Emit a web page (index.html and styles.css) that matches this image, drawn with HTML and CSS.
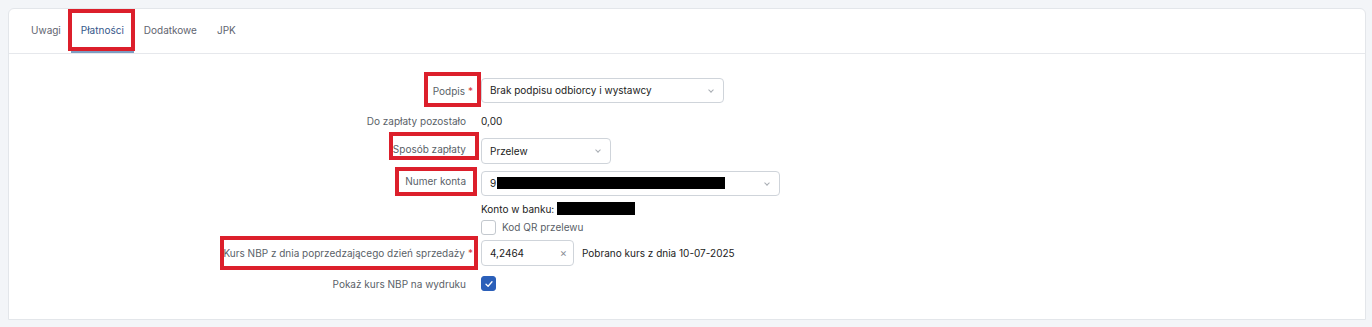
FILE: index.html
```html
<!DOCTYPE html>
<html lang="pl">
<head>
    <meta charset="UTF-8">
    <meta name="viewport" content="width=device-width, initial-scale=1.0">
    <title>Płatności</title>
    <link rel="stylesheet" href="styles.css">
</head>
<body>
    <div class="card">
        <ul class="tabs">
            <li class="tab">Uwagi</li>
            <li class="tab active marked">Płatności</li>
            <li class="tab">Dodatkowe</li>
            <li class="tab">JPK</li>
        </ul>

        <div class="form">
            <div class="row row-podpis">
                <label class="label marked mark-podpis">Podpis<span class="req">*</span></label>
                <div class="control">
                    <div class="select select-wide">Brak podpisu odbiorcy i wystawcy<span class="chevron"></span></div>
                </div>
            </div>

            <div class="row row-text">
                <label class="label">Do zapłaty pozostało</label>
                <div class="control value">0,00</div>
            </div>

            <div class="row row-sposob">
                <label class="label marked mark-sposob">Sposób zapłaty</label>
                <div class="control">
                    <div class="select select-small">Przelew<span class="chevron"></span></div>
                </div>
            </div>

            <div class="row row-konto">
                <label class="label marked mark-konto">Numer konta</label>
                <div class="control">
                    <div class="select select-account">9<span class="redact redact-account"></span><span class="chevron"></span></div>
                </div>
            </div>

            <div class="row row-bank">
                <div class="label"></div>
                <div class="control value">Konto w banku: <span class="redact redact-bank"></span></div>
            </div>

            <div class="row row-qr">
                <div class="label"></div>
                <div class="control check-line">
                    <span class="checkbox"></span>
                    <span class="check-text">Kod QR przelewu</span>
                </div>
            </div>

            <div class="row row-kurs">
                <label class="label marked mark-kurs">Kurs NBP z dnia poprzedzającego dzień sprzedaży<span class="req">*</span></label>
                <div class="control kurs-line">
                    <div class="input">4,2464<span class="clear">×</span></div>
                    <span class="value">Pobrano kurs z dnia 10-07-2025</span>
                </div>
            </div>

            <div class="row row-pokaz">
                <label class="label">Pokaż kurs NBP na wydruku</label>
                <div class="control">
                    <span class="checkbox checked">
                        <svg width="10" height="10" viewBox="0 0 10 10"><path d="M2 5.2 4.1 7.2 8 2.8" fill="none" stroke="#fff" stroke-width="1.3" stroke-linecap="round" stroke-linejoin="round"/></svg>
                    </span>
                </div>
            </div>
        </div>
    </div>
</body>
</html>
```

FILE: styles.css
```css
body {
    margin: 0;
    padding: 8px 6px 0 8px;
    font-family: Inter, "Noto Sans", sans-serif;
    font-size: 10px;
    background-color: #f3f5f8;
    color: #222;
}

.card {
    background-color: #fff;
    border: 1px solid #e3e6ea;
    border-radius: 6px 6px 0 0;
    height: 310px;
}

.tabs {
    list-style: none;
    margin: 0;
    padding: 0 0 0 12px;
    display: flex;
    height: 44px;
    border-bottom: 1px solid #e6e8ec;
}
.tab {
    position: relative;
    padding: 0 10px;
    line-height: 43px;
    color: #5f6570;
}
.tab.active {
    color: #35578a;
    box-shadow: inset 0 -2px 0 #7d9dc2;
}
.tab.marked::after {
    content: "";
    position: absolute;
    left: -3px;
    right: -1px;
    top: 0;
    bottom: 2px;
    border: 4px solid #dc1f2b;
}

.form {
    padding-top: 24px;
}
.row {
    display: flex;
    align-items: center;
    gap: 15px;
}
.label {
    position: relative;
    width: 457px;
    flex: none;
    text-align: right;
    color: #5a5f68;
}
.req {
    color: #d63a3a;
    margin-left: 3px;
    margin-right: -7px;
}
.label.marked::after {
    content: "";
    position: absolute;
    border: 4px solid #dc1f2b;
}
.mark-podpis::after { left: 415px; right: -15px; top: -13px; bottom: -10px; }
.mark-sposob { margin-bottom: 4px; }
.mark-sposob::after { left: 380px; right: -13px; top: -11px; bottom: -5px; }
.mark-konto { margin-bottom: 6px; }
.mark-konto::after { left: 386px; right: -11px; top: -8px; bottom: -9px; }
.mark-kurs::after { left: 211px; right: -12px; top: -11px; bottom: -11px; }

.row-text { margin-top: 5px; height: 25px; }
.row-sposob { margin-top: 5px; }
.row-konto { margin-top: 7px; }
.row-bank { margin-top: 6px; height: 14px; }
.row-qr { margin-top: 4px; height: 14px; }
.row-kurs { margin-top: 6px; }
.row-pokaz { margin-top: 10px; height: 15px; }

.value {
    color: #222;
}

.select,
.input {
    position: relative;
    box-sizing: border-box;
    height: 25px;
    line-height: 23px;
    padding: 0 8px;
    border: 1px solid #cfd4da;
    border-radius: 4px;
    color: #222;
}
.select-wide { width: 243px; }
.select-small { width: 130px; height: 26px; line-height: 24px; }
.select-account { width: 299px; }
.chevron {
    position: absolute;
    right: 10px;
    top: 9px;
    width: 3px;
    height: 3px;
    border-right: 1px solid #a8adb3;
    border-bottom: 1px solid #a8adb3;
    transform: rotate(45deg);
}

.redact {
    display: inline-block;
    background-color: #000;
    vertical-align: middle;
}
.redact-account {
    width: 228px;
    height: 12px;
    margin-left: 1px;
    margin-top: -2px;
}
.redact-bank {
    width: 78px;
    height: 13px;
    margin-left: 0;
    margin-top: -2px;
}

.check-line {
    display: flex;
    align-items: center;
    gap: 6px;
}
.check-text {
    color: #5a5f68;
}
.checkbox {
    display: flex;
    align-items: center;
    justify-content: center;
    box-sizing: border-box;
    width: 15px;
    height: 15px;
    border: 1px solid #c3c8ce;
    border-radius: 3px;
    background-color: #fff;
}
.checkbox.checked {
    background-color: #2b5fb9;
    border-color: #2b5fb9;
}

.kurs-line {
    display: flex;
    align-items: center;
    gap: 8px;
}
.input {
    width: 93px;
    height: 26px;
    line-height: 24px;
}
.clear {
    position: absolute;
    right: 6px;
    top: 0;
    color: #8a9098;
    font-size: 11px;
}
```
